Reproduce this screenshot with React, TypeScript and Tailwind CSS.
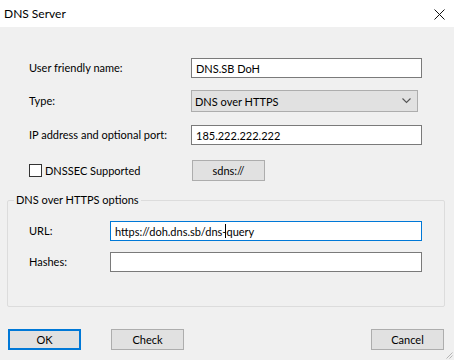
import { FC, ReactNode } from "react";

const font = "font-['Lato','Noto_Sans',sans-serif] text-[11px] text-black";

const TextBox: FC<{ value?: string; width: string }> = ({ value = "", width }) => (
  <div
    className={`${width} h-[20px] bg-white border border-[#7a7a7a] flex items-center pl-[4px] leading-none whitespace-nowrap`}
  >
    {value}
  </div>
);

const Button: FC<{ children: ReactNode; primary?: boolean }> = ({ children, primary = false }) => (
  <div
    className={`w-[73px] h-[21px] bg-[#e1e1e1] flex items-center justify-center leading-none ${
      primary ? "border-2 border-[#0078d7]" : "border border-[#adadad]"
    }`}
  >
    {children}
  </div>
);

const Row: FC<{ label: ReactNode; children: ReactNode; labelWidth: string; className?: string }> = ({
  label,
  children,
  labelWidth,
  className = "",
}) => (
  <div className={`flex items-center whitespace-nowrap ${className}`}>
    <div className={`${labelWidth} shrink-0`}>{label}</div>
    {children}
  </div>
);

export default function App() {
  return (
    <div className={`w-[454px] h-[360px] bg-[#f0f0f0] flex flex-col overflow-hidden ${font}`}>
      {/* Заголовок окна */}
      <div className="h-[27px] shrink-0 bg-white flex items-center justify-between pl-[4px] pr-[9px] text-[12px]">
        <span className="leading-none">DNS Server</span>
        <svg width="11" height="11" viewBox="0 0 11 11" className="mt-[1px]">
          <path d="M0.5 0.5 L10.5 10.5 M10.5 0.5 L0.5 10.5" stroke="#111" strokeWidth="1" />
        </svg>
      </div>

      <div className="flex flex-col shrink-0 pl-[29px] pt-[31px]">
        <Row label="User friendly name:" labelWidth="w-[162px]">
          <TextBox value="DNS.SB DoH" width="w-[231px]" />
        </Row>

        <Row label="Type:" labelWidth="w-[162px]" className="mt-[12px]">
          <div className="w-[227px] h-[22px] bg-[#e1e1e1] border border-[#adadad] flex items-center justify-between pl-[3px] pr-[6px] leading-none">
            <span>DNS over HTTPS</span>
            <svg width="9" height="6" viewBox="0 0 9 6">
              <path d="M0.5 0.5 L4.5 4.5 L8.5 0.5" fill="none" stroke="#555" strokeWidth="1.1" />
            </svg>
          </div>
        </Row>

        <Row label="IP address and optional port:" labelWidth="w-[162px]" className="mt-[13px]">
          <TextBox value="185.222.222.222" width="w-[231px]" />
        </Row>

        <Row
          label={
            <div className="flex items-center gap-[3px]">
              <div className="w-[13px] h-[13px] bg-white border border-[#333]" />
              <span className="leading-none">DNSSEC Supported</span>
            </div>
          }
          labelWidth="w-[163px]"
          className="mt-[15px]"
        >
          <Button>sdns://</Button>
        </Row>
      </div>

      {/* Группа DoH */}
      <fieldset className="shrink-0 ml-[7px] mr-[9px] mt-[11px] border border-[#dcdcdc] rounded-[2px] pb-[34px]">
        <legend className="ml-[6px] px-[2px] leading-[16px]">DNS over HTTPS options</legend>
        <div className="flex flex-col pl-[21px] pt-[13px]">
          <Row label="URL:" labelWidth="w-[81px]">
            <div className="w-[312px] h-[20px] bg-white border border-[#0078d7] flex items-center pl-[4px] leading-none whitespace-nowrap">
              https://doh.dns.sb/dns-
              <span className="relative">
                <span className="absolute left-[-1px] top-[-2px] w-[1px] h-[14px] bg-black" />
                query
              </span>
            </div>
          </Row>
          <Row label="Hashes:" labelWidth="w-[81px]" className="mt-[11px]">
            <TextBox width="w-[312px]" />
          </Row>
        </div>
      </fieldset>

      {/* Кнопки */}
      <div className="shrink-0 flex items-center pl-[8px] pr-[10px] mt-[22px]">
        <Button primary>OK</Button>
        <div className="ml-[30px]">
          <Button>Check</Button>
        </div>
        <div className="ml-auto">
          <Button>Cancel</Button>
        </div>
      </div>

      <div className="flex justify-end pr-[1px] mt-auto pb-[1px]">
        <svg width="9" height="9" viewBox="0 0 9 9">
          <path d="M8.5 2.5 L2.5 8.5 M8.5 5.5 L5.5 8.5" stroke="#b5b5b5" strokeWidth="1" />
        </svg>
      </div>
    </div>
  );
}
